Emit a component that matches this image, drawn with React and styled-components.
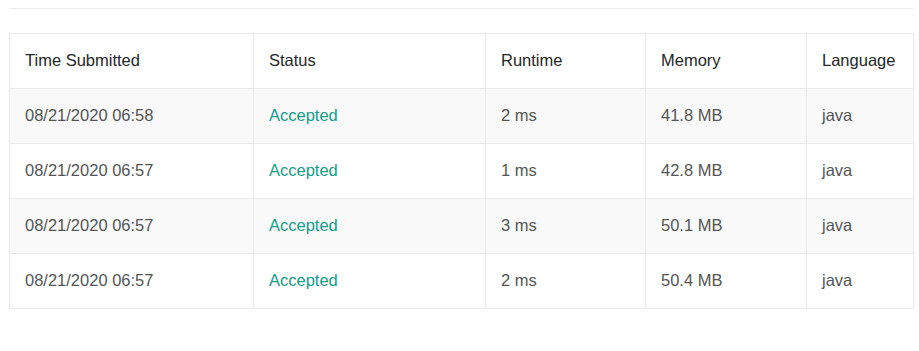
import React from "react";
import styled, { createGlobalStyle } from "styled-components";

const GlobalStyle = createGlobalStyle`
  body {
    margin: 0;
    background: #fff;
    font-family: "Liberation Sans", Arial, sans-serif;
  }
`;

const Page = styled.div`
  padding: 8px 6px 0 9px;
`;

const Divider = styled.div`
  height: 1px;
  background: #eeeeee;
  width: 904px;
`;

const Table = styled.table`
  margin-top: 24px;
  width: 904px;
  border-collapse: collapse;
  border: 1px solid #eaeaea;
  table-layout: fixed;
  font-size: 16.5px;
`;

const HeadCell = styled.th`
  text-align: left;
  font-weight: 400;
  color: #262626;
  height: 55px;
  padding: 0 0 2px 15px;
  border-left: 1px solid #eaeaea;
  box-sizing: border-box;
`;

const Row = styled.tr`
  background: ${({ $odd }) => ($odd ? "#f9f9f9" : "#fff")};
  border-top: 1px solid #eaeaea;
`;

const Cell = styled.td`
  height: 55px;
  padding: 0 0 2px 15px;
  color: ${({ $ok }) => ($ok ? "#139e8a" : "#555555")};
  border-left: 1px solid #eaeaea;
  box-sizing: border-box;
`;

const columns = [
  { title: "Time Submitted", width: 244 },
  { title: "Status", width: 232 },
  { title: "Runtime", width: 160 },
  { title: "Memory", width: 161 },
  { title: "Language", width: 107 },
];

const rows = [
  ["08/21/2020 06:58", "Accepted", "2 ms", "41.8 MB", "java"],
  ["08/21/2020 06:57", "Accepted", "1 ms", "42.8 MB", "java"],
  ["08/21/2020 06:57", "Accepted", "3 ms", "50.1 MB", "java"],
  ["08/21/2020 06:57", "Accepted", "2 ms", "50.4 MB", "java"],
];

export default function App() {
  return (
    <>
      <GlobalStyle />
      <Page>
        <Divider />
        <Table>
          <colgroup>
            {columns.map((c) => (
              <col key={c.title} style={{ width: c.width }} />
            ))}
          </colgroup>
          <thead>
            <tr>
              {columns.map((c) => (
                <HeadCell key={c.title}>{c.title}</HeadCell>
              ))}
            </tr>
          </thead>
          <tbody>
            {rows.map((r, i) => (
              <Row key={i} $odd={i % 2 === 0}>
                {r.map((v, j) => (
                  <Cell key={j} $ok={j === 1}>
                    {v}
                  </Cell>
                ))}
              </Row>
            ))}
          </tbody>
        </Table>
      </Page>
    </>
  );
}
